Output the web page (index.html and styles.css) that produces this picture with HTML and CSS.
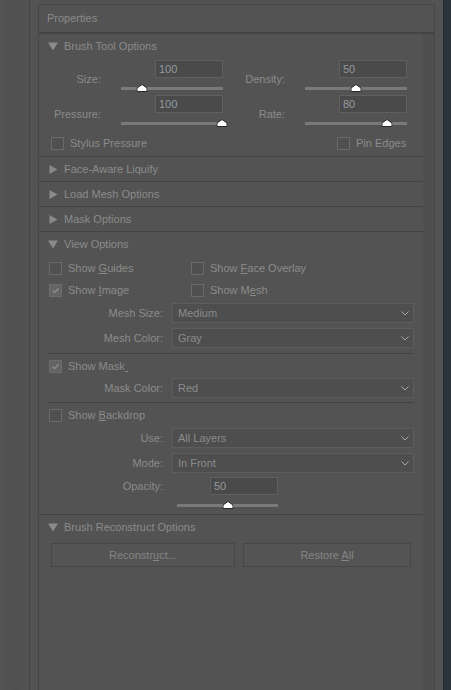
FILE: index.html
```html
<!DOCTYPE html>
<html lang="en">
<head>
    <meta charset="UTF-8">
    <meta name="viewport" content="width=device-width, initial-scale=1.0">
    <title>Properties</title>
    <link rel="stylesheet" href="styles.css">
</head>
<body>
<div class="app">
    <div class="side-left"></div>

    <div class="panel">
        <div class="panel-title">Properties</div>
        <div class="panel-body">
            <div class="content">

                <!-- Brush Tool Options -->
                <div class="section brush">
                    <div class="section-head">
                        <svg class="tri" viewBox="0 0 10 9"><path d="M0 0.5h10L5 8.5z"/></svg>
                        Brush Tool Options
                    </div>
                    <div class="field-row">
                        <div class="field">
                            <span class="field-label">Size:</span>
                            <div class="field-ctrl">
                                <div class="num">100</div>
                                <div class="slider"><svg class="thumb" style="left: 21%" viewBox="0 0 11 8"><path d="M0.5 7.5V4L5.5 0.5L10.5 4V7.5z"/></svg></div>
                            </div>
                        </div>
                        <div class="field">
                            <span class="field-label">Density:</span>
                            <div class="field-ctrl">
                                <div class="num">50</div>
                                <div class="slider"><svg class="thumb" style="left: 50%" viewBox="0 0 11 8"><path d="M0.5 7.5V4L5.5 0.5L10.5 4V7.5z"/></svg></div>
                            </div>
                        </div>
                    </div>
                    <div class="field-row">
                        <div class="field">
                            <span class="field-label">Pressure:</span>
                            <div class="field-ctrl">
                                <div class="num">100</div>
                                <div class="slider"><svg class="thumb" style="left: 99%" viewBox="0 0 11 8"><path d="M0.5 7.5V4L5.5 0.5L10.5 4V7.5z"/></svg></div>
                            </div>
                        </div>
                        <div class="field">
                            <span class="field-label">Rate:</span>
                            <div class="field-ctrl">
                                <div class="num">80</div>
                                <div class="slider"><svg class="thumb" style="left: 80%" viewBox="0 0 11 8"><path d="M0.5 7.5V4L5.5 0.5L10.5 4V7.5z"/></svg></div>
                            </div>
                        </div>
                    </div>
                    <div class="brush-checks">
                        <label class="check"><span class="box"></span><span>Stylus Pressure</span></label>
                        <label class="check"><span class="box"></span><span>Pin Edges</span></label>
                    </div>
                </div>

                <div class="section">
                    <div class="section-head">
                        <svg class="tri" viewBox="0 0 10 9"><path d="M1.5 0v9l8-4.5z"/></svg>
                        Face-Aware Liquify
                    </div>
                </div>
                <div class="section">
                    <div class="section-head">
                        <svg class="tri" viewBox="0 0 10 9"><path d="M1.5 0v9l8-4.5z"/></svg>
                        Load Mesh Options
                    </div>
                </div>
                <div class="section">
                    <div class="section-head">
                        <svg class="tri" viewBox="0 0 10 9"><path d="M1.5 0v9l8-4.5z"/></svg>
                        Mask Options
                    </div>
                </div>

                <!-- View Options -->
                <div class="section view">
                    <div class="section-head">
                        <svg class="tri" viewBox="0 0 10 9"><path d="M0 0.5h10L5 8.5z"/></svg>
                        View Options
                    </div>
                    <div class="check-grid">
                        <label class="check"><span class="box"></span><span>Show <u>G</u>uides</span></label>
                        <label class="check"><span class="box"></span><span>Show <u>F</u>ace Overlay</span></label>
                        <label class="check"><span class="box on"><svg viewBox="0 0 13 13"><path d="M3 6.5l2.5 2.5L10 4"/></svg></span><span>Show <u>I</u>mage</span></label>
                        <label class="check"><span class="box"></span><span>Show M<u>e</u>sh</span></label>
                    </div>
                    <div class="select-row first">
                        <span class="select-label">Mesh Size:</span>
                        <div class="select">Medium<svg viewBox="0 0 8 5"><path d="M0.5 0.5L4 4L7.5 0.5"/></svg></div>
                    </div>
                    <div class="select-row">
                        <span class="select-label">Mesh Color:</span>
                        <div class="select">Gray<svg viewBox="0 0 8 5"><path d="M0.5 0.5L4 4L7.5 0.5"/></svg></div>
                    </div>

                    <div class="rule"></div>
                    <div class="check-line mask">
                        <label class="check"><span class="box on"><svg viewBox="0 0 13 13"><path d="M3 6.5l2.5 2.5L10 4"/></svg></span><span>Show Mask<span class="mnem"></span></span></label>
                    </div>
                    <div class="select-row tight">
                        <span class="select-label">Mask Color:</span>
                        <div class="select">Red<svg viewBox="0 0 8 5"><path d="M0.5 0.5L4 4L7.5 0.5"/></svg></div>
                    </div>

                    <div class="rule second"></div>
                    <div class="check-line">
                        <label class="check"><span class="box"></span><span>Show <u>B</u>ackdrop</span></label>
                    </div>
                    <div class="select-row first">
                        <span class="select-label">Use:</span>
                        <div class="select">All Layers<svg viewBox="0 0 8 5"><path d="M0.5 0.5L4 4L7.5 0.5"/></svg></div>
                    </div>
                    <div class="select-row">
                        <span class="select-label">Mode:</span>
                        <div class="select">In Front<svg viewBox="0 0 8 5"><path d="M0.5 0.5L4 4L7.5 0.5"/></svg></div>
                    </div>
                    <div class="opacity">
                        <span class="select-label">Opacity:</span>
                        <div class="field-ctrl">
                            <div class="num">50</div>
                            <div class="slider"><svg class="thumb" style="left: 50%" viewBox="0 0 11 8"><path d="M0.5 7.5V4L5.5 0.5L10.5 4V7.5z"/></svg></div>
                        </div>
                    </div>
                </div>

                <!-- Brush Reconstruct Options -->
                <div class="section last">
                    <div class="section-head">
                        <svg class="tri" viewBox="0 0 10 9"><path d="M0 0.5h10L5 8.5z"/></svg>
                        Brush Reconstruct Options
                    </div>
                    <div class="buttons">
                        <button class="btn wide">Reconstr<u>u</u>ct...</button>
                        <button class="btn">Restore <u>A</u>ll</button>
                    </div>
                </div>

            </div>
            <div class="scrollbar"></div>
        </div>
    </div>

    <div class="gutter"></div>
    <div class="dock"></div>
</div>
</body>
</html>
```

FILE: styles.css
```css
* {
    box-sizing: border-box;
}
body {
    margin: 0;
    background-color: #535353;
    font-family: "Liberation Sans", Arial, sans-serif;
    font-size: 11px;
    color: #8b8b8b;
}
u {
    text-underline-offset: 1px;
}
.app {
    display: flex;
    height: 690px;
}
.side-left {
    width: 30px;
    border-right: 1px solid #454545;
    background: linear-gradient(to right, #545454, #505050 50%, #535353);
}
.panel {
    width: 397px;
    margin: 4px 0 0 8px;
    border: 1px solid #474747;
    border-bottom: none;
    display: flex;
    flex-direction: column;
}
.panel-title {
    height: 29px;
    padding: 0 8px;
    line-height: 27px;
    border-bottom: 2px solid #444444;
}
.panel-body {
    flex: 1;
    display: flex;
}
.content {
    flex: 1;
}
.scrollbar {
    width: 11px;
    background-color: #4e4e4e;
}
.gutter {
    width: 8px;
}
.dock {
    flex: 1;
    background-color: #2b343a;
    border-left: 1px solid #252d33;
}

/* sections */
.section {
    border-bottom: 1px solid #434343;
}
.section.last {
    border-bottom: none;
}
.section-head {
    height: 24px;
    display: flex;
    align-items: center;
    gap: 6px;
    padding-left: 9px;
}
.tri {
    width: 10px;
    height: 9px;
    fill: #8a8a8a;
}

/* number fields with sliders */
.field-row {
    display: flex;
    margin-top: 2px;
}
.field-row + .field-row {
    margin-top: 3px;
}
.field {
    display: flex;
}
.field-label {
    width: 62px;
    margin-right: 20px;
    text-align: right;
    align-self: flex-end;
    line-height: 13px;
    margin-bottom: 6px;
}
.field-ctrl {
    width: 102px;
    display: flex;
    flex-direction: column;
    align-items: flex-end;
}
.num {
    width: 68px;
    height: 18px;
    border: 1px solid #5f5f5f;
    background-color: #4a4a4a;
    padding-left: 3px;
    line-height: 16px;
    color: #949aa0;
}
.slider {
    position: relative;
    align-self: stretch;
    height: 8px;
    margin-top: 6px;
}
.slider::before {
    content: "";
    position: absolute;
    left: 0;
    right: 0;
    top: 3px;
    height: 3px;
    background-color: #7a7a7a;
}
.thumb {
    position: absolute;
    top: 0;
    width: 11px;
    height: 8px;
    transform: translateX(-50%);
    fill: #ffffff;
    stroke: #262626;
    stroke-width: 1;
}

/* checkboxes */
.check {
    display: flex;
    align-items: center;
    gap: 6px;
    white-space: nowrap;
}
.box {
    width: 13px;
    height: 13px;
    border: 1px solid #6a6a6a;
    background-color: #505050;
    display: inline-flex;
}
.box.on {
    background-color: #646464;
    border-color: #6c6c6c;
}
.box svg {
    width: 11px;
    height: 11px;
    fill: none;
    stroke: #868686;
    stroke-width: 2;
}
.mnem {
    display: inline-block;
    width: 3px;
    height: 11px;
    vertical-align: -2px;
    border-bottom: 1px solid #8b8b8b;
}
.brush-checks {
    display: grid;
    grid-template-columns: 286px auto;
    align-items: center;
    height: 26px;
    margin-top: 3px;
    padding-left: 12px;
}
.check-grid {
    display: grid;
    grid-template-columns: 142px auto;
    grid-auto-rows: 22px;
    align-items: center;
    padding: 1px 0 0 10px;
}
.check-line {
    height: 22px;
    display: flex;
    align-items: center;
    padding-left: 10px;
    margin-top: 1px;
}

/* dropdowns */
.select-row {
    display: flex;
    align-items: center;
    margin-top: 5px;
}
.select-row.first {
    margin-top: 2px;
}
.select-row.tight {
    margin-top: 1px;
}
.select-label {
    width: 124px;
    margin-right: 9px;
    text-align: right;
}
.select {
    width: 242px;
    height: 20px;
    border: 1px solid #5d5d5d;
    background-color: #4e4e4e;
    display: flex;
    align-items: center;
    justify-content: space-between;
    padding: 0 4px 0 5px;
}
.select svg {
    width: 8px;
    height: 5px;
    fill: none;
    stroke: #a6a6a6;
    stroke-width: 1;
}
.rule {
    height: 1px;
    margin: 5px 9px 0 8px;
    background-color: #434343;
}
.rule.second {
    margin-top: 4px;
}
.opacity {
    display: flex;
    margin-top: 4px;
    padding-bottom: 5px;
}
.opacity .select-label {
    margin-right: 14px;
    line-height: 18px;
}
.opacity .field-ctrl {
    width: 101px;
}

/* buttons */
.buttons {
    display: flex;
    gap: 8px;
    padding: 4px 0 0 12px;
}
.btn {
    height: 24px;
    width: 168px;
    border: 1px solid #474747;
    background-color: #545454;
    color: #858585;
    font-family: inherit;
    font-size: 11px;
    padding: 0;
}
.btn.wide {
    width: 184px;
}
```
